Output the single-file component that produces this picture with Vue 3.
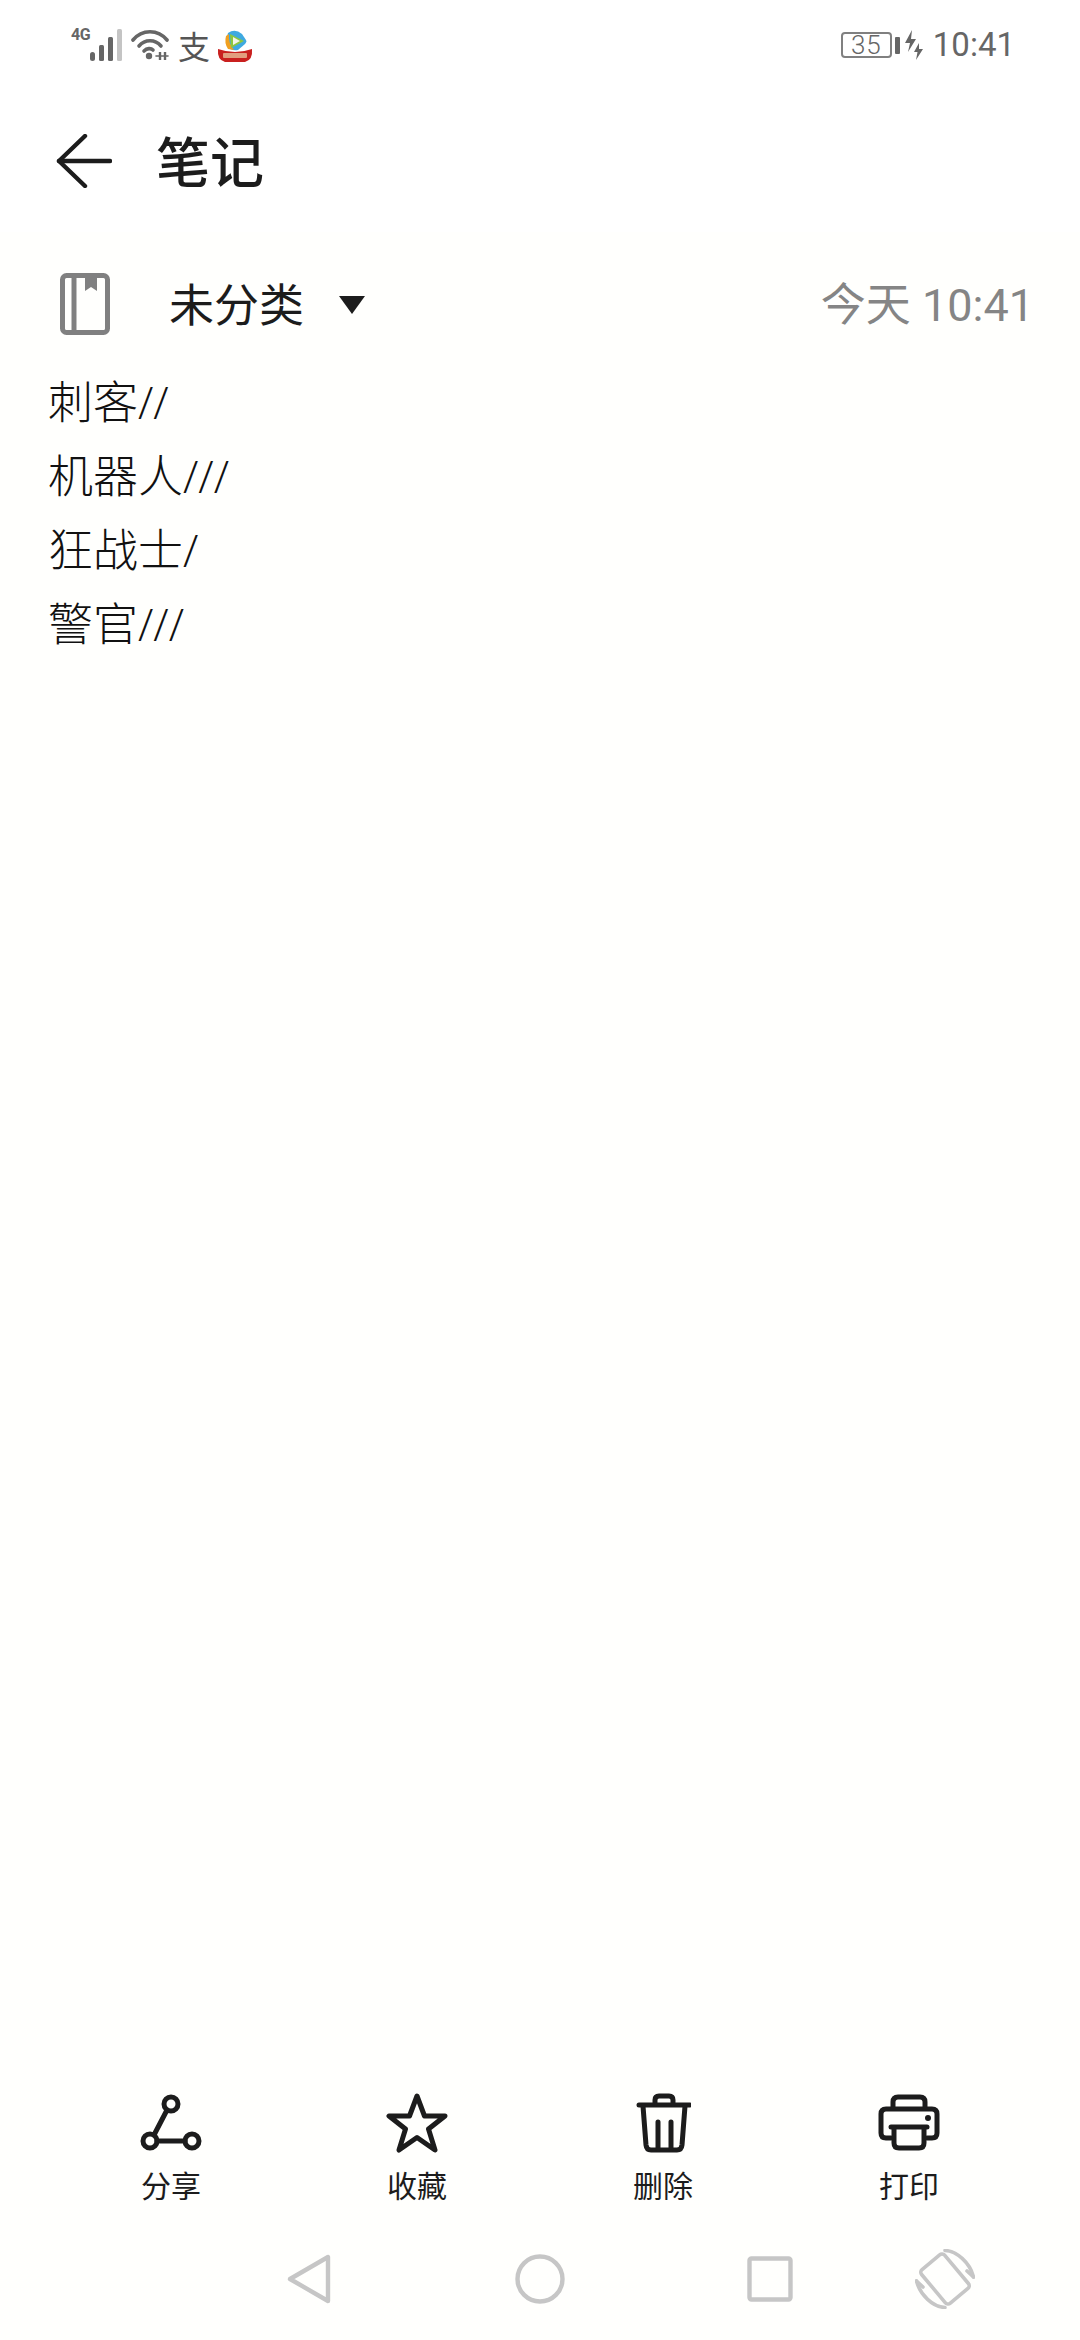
<script setup>
const lines = ['刺客//', '机器人///', '狂战士/', '警官///']
</script>

<template>
  <div class="page">
    <div class="top">
      <div class="status">
        <div class="status-left">
          <span class="net">4G</span>
          <svg class="signal" width="34" height="34" viewBox="0 0 34 34">
            <rect x="1" y="24" width="5" height="9" rx="2.5" fill="#666" />
            <rect x="10" y="17" width="5" height="16" rx="1.5" fill="#666" />
            <rect x="19" y="9" width="5" height="24" rx="1.5" fill="#666" />
            <rect x="28" y="1" width="5" height="32" rx="1.5" fill="#c4c4c4" />
          </svg>
          <svg class="wifi" width="38" height="32" viewBox="0 0 38 32" fill="none" stroke="#666" stroke-width="3.6" stroke-linecap="round">
            <path d="M2 11C11 0 27 0 36 11" />
            <path d="M8 17C14 10 24 10 30 17" />
            <path d="M13 22C16 19 20 19 22 21" />
            <circle cx="18" cy="27" r="3.2" fill="#666" stroke="none" />
            <path d="M25 27h12" stroke-width="1.6" />
            <path d="M29 23v8M34 23v8" stroke-width="2.4" stroke-linecap="butt" />
          </svg>
          <span class="pay">支</span>
          <svg class="video" width="36" height="34" viewBox="0 0 36 34">
            <path d="M11 4Q18-1 25 5L29 11Q30 13 28 15L21 21Q17 22 13 20Q8 12 11 4Z" fill="#3fa9e0" />
            <path d="M9 7Q7 14 11 20L17 21Q11 14 12 5Z" fill="#f0a020" />
            <path d="M13 5L27 12L14 19Z" fill="#8cc63f" />
            <path d="M16 8L23 12L16 16Z" fill="#f4f4e8" />
            <path d="M1 20Q18 26 35 20Q36 31 28 33H8Q0 31 1 20Z" fill="#c9201f" />
            <rect x="6" y="24" width="24" height="5" rx="1" fill="#eac8a0" opacity=".75" />
          </svg>
        </div>
        <div class="status-right">
          <span class="battery">35</span>
          <span class="nub"></span>
          <svg class="bolts" width="20" height="32" viewBox="0 0 20 32" fill="#666">
            <path d="M8 1L1 14H6L4 23L12 10H7Z" />
            <path d="M15 14L10 23H13.5L12 31L19 20H15Z" />
          </svg>
          <span class="clock">10:41</span>
        </div>
      </div>

      <header class="header">
        <svg class="back" width="56" height="54" viewBox="0 0 56 54" fill="none" stroke="#1c1c1c" stroke-width="4.4" stroke-linecap="round" stroke-linejoin="round">
          <path d="M29 2L3 27L29 52" />
          <path d="M3 27H54" />
        </svg>
        <h1 class="title">笔记</h1>
      </header>
    </div>

    <main class="note">
      <div class="meta">
        <svg class="book" width="50" height="62" viewBox="0 0 50 62" fill="none" stroke="#808080" stroke-width="5">
          <rect x="2.5" y="2.5" width="45" height="57" rx="4" />
          <path d="M14 2V60" />
          <path d="M25 2H37V18L31 14L25 18Z" fill="#808080" stroke="none" />
        </svg>
        <span class="category">未分类</span>
        <span class="caret"></span>
        <span class="time">今天 10:41</span>
      </div>
      <div class="body">
        <p v-for="line in lines" :key="line" class="line">{{ line }}</p>
      </div>
    </main>

    <section class="actions">
      <div class="action">
        <svg width="62" height="58" viewBox="0 0 62 58" fill="none" stroke="#1c1c1c" stroke-width="5" stroke-linecap="round">
          <circle cx="31" cy="10" r="7" />
          <circle cx="10" cy="47" r="7" />
          <circle cx="52" cy="47" r="7" />
          <path d="M27 16L14 41M17 47H45" />
        </svg>
        <span class="label">分享</span>
      </div>
      <div class="action">
        <svg width="62" height="60" viewBox="0 0 62 60" fill="none" stroke="#1c1c1c" stroke-width="5" stroke-linejoin="round">
          <path d="M31 3L38.5 23H59L42.5 36L49 57L31 44.5L13 57L19.5 36L3 23H23.5Z" />
        </svg>
        <span class="label">收藏</span>
      </div>
      <div class="action">
        <svg width="56" height="60" viewBox="0 0 56 60" fill="none" stroke="#1c1c1c" stroke-width="5" stroke-linecap="round" stroke-linejoin="round">
          <path d="M4 12H55" />
          <path d="M20 11V7Q20 3 24 3H34Q38 3 38 7V11" />
          <path d="M8 13L11 52Q11.500 57 16 57H42Q46.500 57 47 52L50 13" />
          <path d="M23 29V56M36 29V56" />
        </svg>
        <span class="label">删除</span>
      </div>
      <div class="action">
        <svg width="62" height="58" viewBox="0 0 62 58" fill="none" stroke="#1c1c1c" stroke-width="5" stroke-linecap="round" stroke-linejoin="round">
          <path d="M15 14V8Q15 3 20 3H42Q47 3 47 8V14" />
          <path d="M13 44H8Q3 44 3 39V20Q3 15 8 15H54Q59 15 59 20V39Q59 44 54 44H49" />
          <path d="M13 33H49" />
          <path d="M16 34V49Q16 54 21 54H41Q46 54 46 49V34" />
          <circle cx="50" cy="24" r="3" fill="#1c1c1c" stroke="none" />
        </svg>
        <span class="label">打印</span>
      </div>
    </section>

    <nav class="navbar">
      <svg class="nav-back" width="44" height="50" viewBox="0 0 44 50" fill="none" stroke="#c6c6c6" stroke-width="4.400" stroke-linejoin="round">
        <path d="M41 3V47L3 25Z" />
      </svg>
      <svg class="nav-home" width="50" height="50" viewBox="0 0 50 50" fill="none" stroke="#c6c6c6" stroke-width="4.400">
        <circle cx="25" cy="25" r="22.500" />
      </svg>
      <svg class="nav-recent" width="46" height="46" viewBox="0 0 46 46" fill="none" stroke="#c6c6c6" stroke-width="4.400" stroke-linejoin="round">
        <rect x="2.500" y="2.500" width="41" height="41" rx="2" />
      </svg>
      <svg class="nav-rotate" width="60" height="60" viewBox="0 0 60 60" fill="none" stroke="#c6c6c6" stroke-width="3.600" stroke-linejoin="round">
        <rect x="15" y="8" width="30" height="44" rx="3.500" transform="rotate(-40 30 30)" />
        <path d="M30 1.500C42 2 55 14 58.500 28" stroke-linecap="round" />
        <path d="M30 58.500C18 58 5 46 1.500 32" stroke-linecap="round" />
        <path d="M58.500 28L52 22M1.500 32L8 38" stroke-linecap="round" />
      </svg>
    </nav>
  </div>
</template>

<style scoped>
.page {
  width: 1080px;
  height: 2340px;
  display: flex;
  flex-direction: column;
  background: #fffffd;
  color: #1c1c1c;
  font-family: Roboto, "Noto Sans CJK SC", sans-serif;
}

.top {
  background: #fff;
  height: 232px;
}

.status {
  height: 90px;
  padding: 0 65px 0 71px;
  box-sizing: border-box;
  display: flex;
  justify-content: space-between;
  align-items: center;
}

.status-left,
.status-right {
  display: flex;
  align-items: center;
}

.net {
  align-self: flex-start;
  margin-top: -1px;
  font-size: 16px;
  line-height: 18px;
  font-weight: 700;
  color: #666;
  width: 18px;
  letter-spacing: -0.5px;
}

.wifi {
  margin-left: 8px;
}

.pay {
  margin-left: 9px;
  width: 34px;
  font-size: 32px;
  line-height: 34px;
  color: #555;
  font-family: "Noto Sans CJK SC", sans-serif;
}

.video {
  margin-left: 5px;
  margin-top: 2px;
}

.battery {
  width: 51px;
  height: 26px;
  box-sizing: border-box;
  border: 2px solid #808080;
  border-radius: 4px;
  font-size: 26px;
  font-weight: 300;
  line-height: 22px;
  letter-spacing: 1px;
  text-align: center;
  color: #666;
}

.nub {
  width: 5px;
  height: 17px;
  margin-left: 3px;
  border-radius: 1px;
  background: #666;
}

.bolts {
  margin-left: 4px;
}

.clock {
  margin-left: 9px;
  font-size: 33px;
  line-height: 40px;
  color: #666;
}

.header {
  height: 142px;
  display: flex;
  align-items: center;
  padding-left: 56px;
  box-sizing: border-box;
}

.back {
  margin-top: -1px;
}

.title {
  margin: -2px 0 0 44px;
  font-family: "Noto Sans CJK SC", sans-serif;
  font-size: 54px;
  font-weight: 500;
  line-height: 60px;
}

.note {
  flex: 1;
}

.meta {
  height: 146px;
  display: flex;
  align-items: center;
  padding: 0 46px 0 60px;
  box-sizing: border-box;
}

.book {
  flex: none;
  margin-top: -2px;
}

.category {
  margin: -4px 0 0 59px;
  font-family: "Noto Sans CJK SC", sans-serif;
  font-size: 45px;
  line-height: 52px;
}

.caret {
  margin-left: 35px;
  width: 0;
  height: 0;
  border-left: 13.500px solid transparent;
  border-right: 13.500px solid transparent;
  border-top: 18px solid #1c1c1c;
}

.time {
  margin: 2px 0 0 auto;
  font-size: 45px;
  font-weight: 400;
  line-height: 52px;
  color: #858585;
  font-family: Roboto, "Noto Sans CJK SC", sans-serif;
}

.body {
  padding: 0 48px;
  margin-top: -13px;
}

.line {
  margin: 0;
  font-family: "Open Sans", "Noto Sans CJK SC", sans-serif;
  font-size: 45px;
  font-weight: 300;
  line-height: 74px;
  color: #111;
}

.actions {
  display: grid;
  grid-template-columns: repeat(4, 246px);
  justify-content: start;
  padding-left: 48px;
  height: 128px;
  margin-bottom: 20px;
}

.action {
  display: flex;
  flex-direction: column;
  align-items: center;
  padding-top: 3px;
}

.action svg {
  height: 60px;
}

.label {
  margin-top: 13px;
  font-family: "Noto Sans CJK SC", sans-serif;
  font-size: 30px;
  line-height: 36px;
  font-weight: 400;
}

.navbar {
  height: 102px;
  display: flex;
  align-items: flex-start;
  padding: 14px 0 0 287px;
  box-sizing: border-box;
}

.nav-back {
  margin-top: 2px;
}

.nav-home {
  margin: 2px 0 0 184px;
}

.nav-recent {
  margin: 4px 0 0 182px;
}

.nav-rotate {
  margin: -3px 0 0 122px;
}
</style>

<style>
html,
body {
  margin: 0;
  background: #fff;
}
</style>
